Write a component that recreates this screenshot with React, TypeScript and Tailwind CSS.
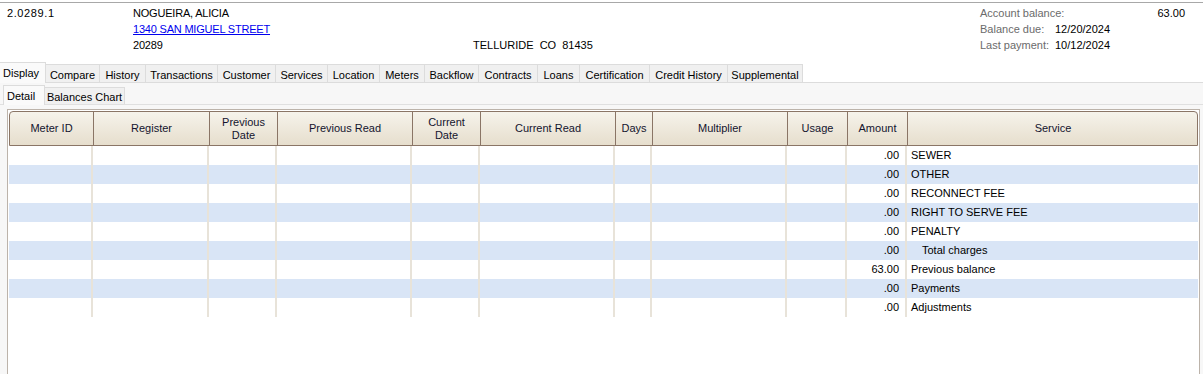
const tabs = [
  ["Display", 46],
  ["Compare", 54],
  ["History", 46],
  ["Transactions", 72],
  ["Customer", 58],
  ["Services", 52],
  ["Location", 52],
  ["Meters", 45],
  ["Backflow", 54],
  ["Contracts", 59],
  ["Loans", 42],
  ["Certification", 70],
  ["Credit History", 78],
  ["Supplemental", 75],
] as const;

const cols = [
  "Meter ID",
  "Register",
  "Previous\nDate",
  "Previous Read",
  "Current\nDate",
  "Current Read",
  "Days",
  "Multiplier",
  "Usage",
  "Amount",
  "Service",
];

const rows = [
  [".00", "SEWER"],
  [".00", "OTHER"],
  [".00", "RECONNECT FEE"],
  [".00", "RIGHT TO SERVE FEE"],
  [".00", "PENALTY"],
  [".00", "Total charges"],
  ["63.00", "Previous balance"],
  [".00", "Payments"],
  [".00", "Adjustments"],
];

const gridCols =
  "grid grid-cols-[84px_116px_68px_135px_68px_135px_37px_135px_60px_60px_290px]";

export default function App() {
  return (
    <div className="w-[1203px] h-[374px] overflow-hidden bg-white text-[11px] text-black font-['Liberation_Sans',Arial,sans-serif]">
      <div className="h-[2px]" />
      <div className="border-t border-[#a8a8a8]" />

      {/* account header */}
      <div className="h-[59px]">
        <div className="grid grid-cols-[126px_340px_507px_75px_1fr] pl-[7px] pt-[2px] leading-[16px]">
          <div className="tracking-[0.6px]">2.0289.1</div>
          <div className="flex flex-col tracking-[-0.2px]">
            <span>NOGUEIRA, ALICIA</span>
            <span className="text-[#0000ee] underline">1340 SAN MIGUEL STREET</span>
            <span>20289</span>
          </div>
          <div className="flex flex-col">
            <span>&nbsp;</span>
            <span>&nbsp;</span>
            <span className="whitespace-pre">TELLURIDE  CO  81435</span>
          </div>
          <div className="flex flex-col text-[#6b6b6b] whitespace-nowrap">
            <span>Account balance:</span>
            <span>Balance due:</span>
            <span>Last payment:</span>
          </div>
          <div className="flex flex-col pr-[18px]">
            <span className="text-right">63.00</span>
            <span>12/20/2024</span>
            <span>10/12/2024</span>
          </div>
        </div>
      </div>

      {/* main tabs */}
      <div className="flex items-end h-[21px] border-b border-[#dcdcdc]">
        {tabs.map(([label, w], i) => (
          <div
            key={label}
            style={{ width: w }}
            className={
              i === 0
                ? "h-[21px] -mb-px bg-[#fafafa] border-t border-r border-[#dcdcdc] px-[3px] pt-[2px] text-left"
                : "h-[18px] bg-[#f0f0f0] border-t border-r border-[#dcdcdc] text-center pt-[2px]"
            }
          >
            {label}
          </div>
        ))}
      </div>

      {/* panel */}
      <div className="bg-[#f7f7f7] h-[292px] pt-[1px]">
        <div className="flex items-end h-[21px] border-b border-[#e0e0e0] pl-[3px]">
          <div className="w-[42px] h-[20px] -mb-px bg-[#fafafa] border-t border-l border-r border-[#dcdcdc] px-[3px] pt-[2px]">
            Detail
          </div>
          <div className="w-[80px] h-[17px] bg-[#f0f0f0] border-t border-r border-[#dcdcdc] text-center pt-[1px]">
            Balances Chart
          </div>
        </div>

        {/* grid */}
        <div className="ml-[7px] mr-[3px] mt-[4px] h-[272px] bg-white border-l border-t border-r border-[#bcb3aa] pl-px pt-px pr-px">
          <div
            className={`${gridCols} h-[35px] rounded-t-[4px] border border-[#8a7566] bg-gradient-to-b from-[#f6f3eb] to-[#e6decd] text-[#14142e]`}
          >
            {cols.map((c, i) => (
              <div
                key={c}
                className={`flex items-center justify-center text-center whitespace-pre-line leading-[13px] ${
                  i < cols.length - 1 ? "border-r border-[#8a7566]" : ""
                }`}
              >
                {c}
              </div>
            ))}
          </div>
          {rows.map(([amt, svc], r) => (
            <div
              key={svc}
              className={`${gridCols} h-[19px] ${r % 2 === 1 ? "bg-[#d9e5f6]" : "bg-white"}`}
            >
              {cols.map((c, i) => (
                <div
                  key={c}
                  className={`flex items-center ${
                    i < cols.length - 1 ? "border-r-2 border-[#e8e3d9]" : ""
                  } ${i === 9 ? "justify-end pr-[6px]" : ""} ${
                    i === 10 ? (svc === "Total charges" ? "pl-[15px]" : "pl-[4px]") : ""
                  }`}
                >
                  {i === 9 ? amt : i === 10 ? svc : ""}
                </div>
              ))}
            </div>
          ))}
        </div>
      </div>
    </div>
  );
}
